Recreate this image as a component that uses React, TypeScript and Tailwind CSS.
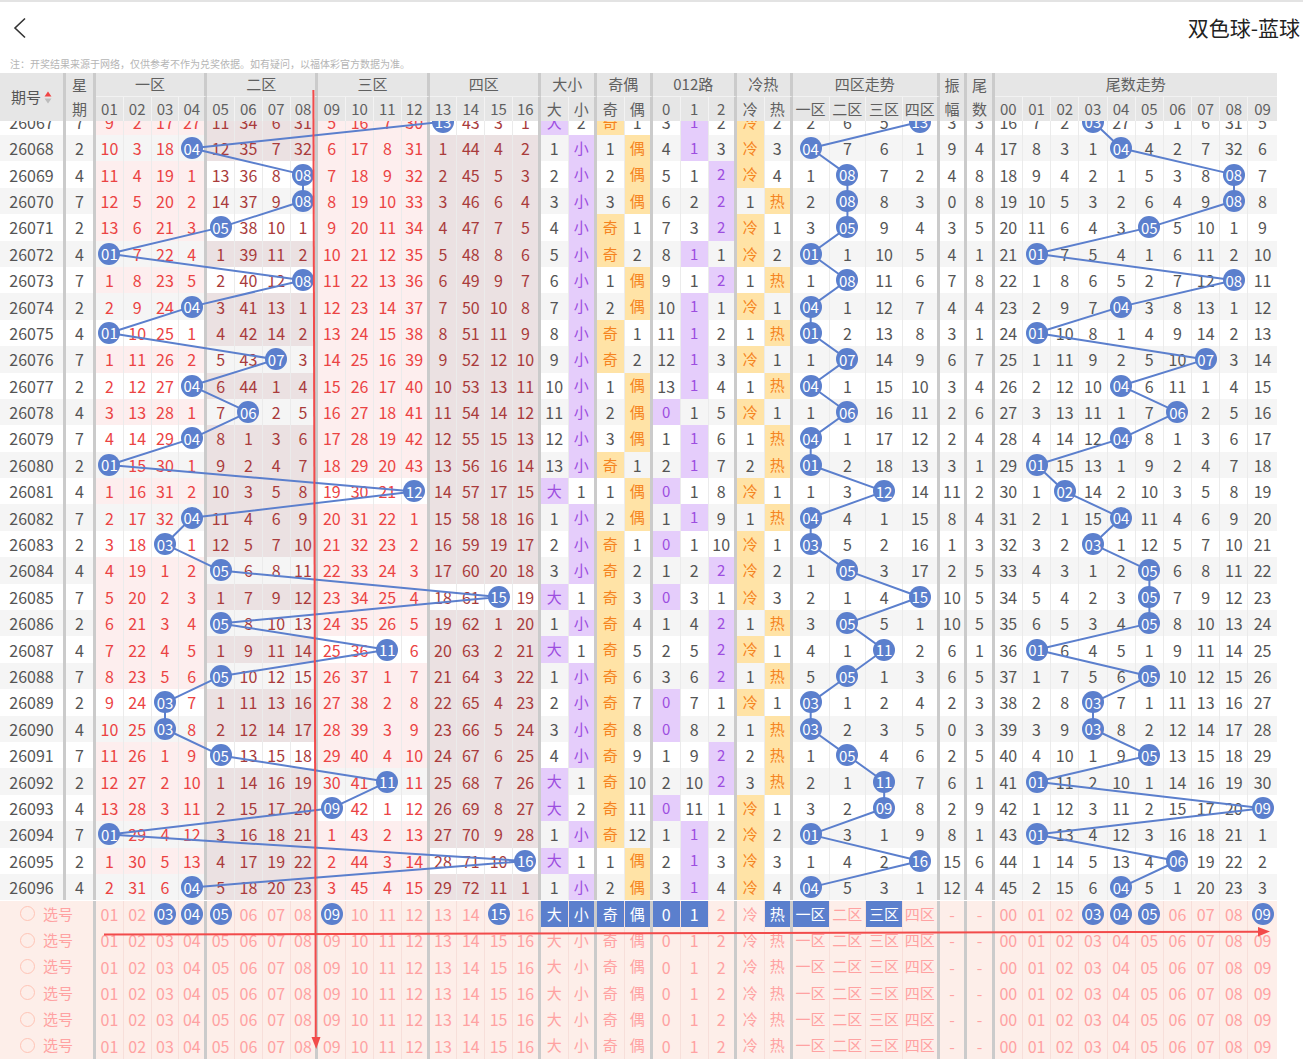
import React from "react";

const BALLS = [13, 4, 8, 8, 5, 1, 8, 4, 1, 7, 4, 6, 4, 1, 12, 4, 3, 5, 15, 5, 11, 5, 3, 3, 5, 11, 9, 1, 16, 4];
// true = 热 hit, false = 冷 hit
const HOT = [
  false, false, false, true, false, false, true, false, true, false,
  true, false, true, true, false, true, false, false, false, true,
  false, true, false, true, true, true, false, false, false, false,
];
const WEEK = [7, 2, 4];

const W: number[] = [
  66, 30,
  ...Array(16).fill(27.8),
  ...Array(9).fill(28),
  ...Array(4).fill(36.75),
  27.5, 27.5,
  ...Array(10).fill(28.2),
];
const THICK = new Set([0, 1, 5, 9, 13, 17, 19, 21, 24, 26, 30, 31, 32]);
const LAST = 42;
const brW = (c: number) => (THICK.has(c) ? 3 : c === LAST ? 0 : 1);
const colX: number[] = [];
{
  let acc = 0;
  W.forEach((w, c) => {
    colX.push(acc + (w - brW(c)) / 2);
    acc += w;
  });
}

const GRID =
  "grid w-[1277px] grid-cols-[66px_30px_repeat(16,27.8px)_repeat(9,28px)_repeat(4,36.75px)_27.5px_27.5px_repeat(10,28.2px)]";

function borderCls(c: number, kind: "body" | "head" | "sel" = "body") {
  if (THICK.has(c)) return "border-r-[3px] border-[#cbcbcb]";
  if (c === LAST) return "";
  if (kind === "head") return "border-r border-[#f3f3f3]";
  if (kind === "sel") return "border-r border-[#f7dfda]";
  return "border-r border-[#ebebeb]";
}

const pad = (n: number) => n.toString().padStart(2, "0");
const step = (prev: number[], hit: number) => prev.map((v, c) => (c === hit ? 0 : v + 1));

type Row = {
  b: number;
  num: number[];
  big: number[];
  odd: number[];
  mod: number[];
  hot: number[];
  zone: number[];
  tail: number[];
  amp: number;
};

const ROWS: Row[] = (() => {
  let num = [9, 2, 17, 27, 11, 34, 6, 31, 5, 16, 7, 30, 0, 43, 3, 1];
  let big = [0, 2];
  let odd = [0, 1];
  let mod = [3, 0, 2];
  let hot = [0, 2];
  let zone = [2, 6, 5, 0];
  let tail = [16, 7, 2, 0, 27, 3, 1, 6, 31, 5];
  const out: Row[] = [];
  let prevB = 16;
  BALLS.forEach((b, i) => {
    if (i > 0) {
      num = step(num, b - 1);
      big = step(big, b >= 9 ? 0 : 1);
      odd = step(odd, b % 2 === 1 ? 0 : 1);
      mod = step(mod, b % 3);
      hot = step(hot, HOT[i] ? 1 : 0);
      zone = step(zone, Math.floor((b - 1) / 4));
      tail = step(tail, b % 10);
    }
    out.push({ b, num, big, odd, mod, hot, zone, tail, amp: Math.abs(b - prevB) });
    prevB = b;
  });
  return out;
})();

function Ball({ label }: { label: string }) {
  return (
    <span className="relative z-20 flex h-[22px] w-[22px] items-center justify-center rounded-full bg-[#5b7fcd] text-[15px] leading-none text-white">
      {label}
    </span>
  );
}

const BASE = "flex items-center justify-center";
const PURPLE = "bg-[#e5cdfb] text-[#9d4ee0] text-[15px]";
const ORANGE = "bg-[#ffe3a6] text-[#f5841f] text-[15px]";

function DataRow({ i }: { i: number }) {
  const r = ROWS[i];
  const b = r.b;
  const rowBg = i % 2 === 0 ? "bg-white" : "bg-[#f5f5f5]";
  const cells: React.ReactNode[] = [];
  const plain = (c: number, content: React.ReactNode) =>
    cells.push(
      <div key={c} className={`${BASE} ${borderCls(c)} ${rowBg} text-[#555]`}>
        {content}
      </div>
    );
  const hitCell = (c: number, text: string, style: string) =>
    cells.push(
      <div key={c} className={`${BASE} ${borderCls(c)} ${style}`}>
        {text}
      </div>
    );

  plain(0, `${26067 + i}`);
  plain(1, WEEK[i % 3]);
  const bz = Math.floor((b - 1) / 4);
  for (let n = 1; n <= 16; n++) {
    const c = n + 1;
    const z = Math.floor((n - 1) / 4);
    const bg = z === bz ? rowBg : z % 2 === 0 ? "bg-[#fdeeee]" : "bg-[#ebe1e2]";
    const txt = z % 2 === 0 ? "text-[#eb4343]" : "text-[#a93b3b]";
    cells.push(
      <div key={c} className={`${BASE} ${borderCls(c)} ${bg} ${txt}`}>
        {n === b ? <Ball label={pad(n)} /> : r.num[n - 1]}
      </div>
    );
  }
  ["大", "小"].forEach((t, k) => (r.big[k] === 0 ? hitCell(18 + k, t, PURPLE) : plain(18 + k, r.big[k])));
  ["奇", "偶"].forEach((t, k) => (r.odd[k] === 0 ? hitCell(20 + k, t, ORANGE) : plain(20 + k, r.odd[k])));
  ["0", "1", "2"].forEach((t, k) => (r.mod[k] === 0 ? hitCell(22 + k, t, PURPLE) : plain(22 + k, r.mod[k])));
  ["冷", "热"].forEach((t, k) => (r.hot[k] === 0 ? hitCell(25 + k, t, ORANGE) : plain(25 + k, r.hot[k])));
  r.zone.forEach((v, k) => plain(27 + k, v === 0 ? <Ball label={pad(b)} /> : v));
  plain(31, r.amp);
  plain(32, b % 10);
  r.tail.forEach((v, k) => plain(33 + k, v === 0 ? <Ball label={pad(k)} /> : v));

  return <div className={`${GRID} h-[26.4px] text-[16px]`}>{cells}</div>;
}

function SortIcon() {
  return (
    <svg width="8" height="13" viewBox="0 0 8 13">
      <path d="M4 0.5 L7.5 5.5 H0.5 Z" fill="#f04545" />
      <path d="M4 12.5 L7.5 7.5 H0.5 Z" fill="#bdbdbd" />
    </svg>
  );
}

function Header() {
  const groups: [string, string, number][] = [
    ["一区", "col-span-4", 5],
    ["二区", "col-span-4", 9],
    ["三区", "col-span-4", 13],
    ["四区", "col-span-4", 17],
    ["大小", "col-span-2", 19],
    ["奇偶", "col-span-2", 21],
    ["012路", "col-span-3", 24],
    ["冷热", "col-span-2", 26],
    ["四区走势", "col-span-4", 30],
  ];
  const labels: [number, string][] = [];
  for (let n = 1; n <= 16; n++) labels.push([n + 1, pad(n)]);
  ["大", "小", "奇", "偶", "0", "1", "2", "冷", "热", "一区", "二区", "三区", "四区"].forEach((t, k) =>
    labels.push([18 + k, t])
  );
  const tails: [number, string][] = [];
  for (let k = 0; k < 10; k++) tails.push([33 + k, pad(k)]);

  return (
    <div className={`${GRID} h-[48px] grid-rows-[24px_24px] bg-[#e6e6e6] text-[15px] text-[#606060]`}>
      <div className="row-span-2 flex items-center justify-center gap-[3px] border-r-[3px] border-[#cbcbcb] text-[#555]">
        <span>期号</span>
        <SortIcon />
      </div>
      <div className="row-span-2 flex flex-col items-center justify-around border-r-[3px] border-[#cbcbcb]">
        <span>星</span>
        <span>期</span>
      </div>
      {groups.map(([t, span, c]) => (
        <div
          key={t}
          className={`${span} flex items-center justify-center border-b border-r-[3px] border-b-[#f2f2f2] border-r-[#cbcbcb]`}
        >
          {t}
        </div>
      ))}
      <div className="row-span-2 flex flex-col items-center justify-around border-r-[3px] border-[#cbcbcb]">
        <span>振</span>
        <span>幅</span>
      </div>
      <div className="row-span-2 flex flex-col items-center justify-around border-r-[3px] border-[#cbcbcb]">
        <span>尾</span>
        <span>数</span>
      </div>
      <div className="col-span-10 flex items-center justify-center border-b border-b-[#f2f2f2]">尾数走势</div>
      {labels.map(([c, t]) => (
        <div key={c} className={`${BASE} ${borderCls(c, "head")}`}>
          {t}
        </div>
      ))}
      {tails.map(([c, t]) => (
        <div key={c} className={`${BASE} ${borderCls(c, "head")}`}>
          {t}
        </div>
      ))}
    </div>
  );
}

const ys = (i: number) => -12.4 + 26.4 * i + 13.2;
const SEQ = [16, ...BALLS];
const pts = (f: (b: number) => number) =>
  SEQ.map((b, k) => `${colX[f(b)].toFixed(2)},${ys(k - 1).toFixed(2)}`).join(" ");

function Body() {
  return (
    <div className="relative h-[779.6px] w-[1277px] overflow-hidden">
      <div className="-mt-[12.4px]">
        {ROWS.map((_, i) => (
          <DataRow key={i} i={i} />
        ))}
      </div>
      <svg className="pointer-events-none absolute left-0 top-0 z-10" width={1277} height={780}>
        {[pts((b) => 1 + b), pts((b) => 27 + Math.floor((b - 1) / 4)), pts((b) => 33 + (b % 10))].map((p, k) => (
          <polyline key={k} points={p} fill="none" stroke="#5b7fcd" strokeWidth={2} strokeLinejoin="round" />
        ))}
      </svg>
    </div>
  );
}

const SEL_BALLS = new Set([4, 5, 6, 10, 16, 36, 37, 38, 42]);
const SEL_BLOCKS = new Set([18, 19, 20, 21, 22, 23, 26, 27, 29]);

function selLabel(c: number) {
  if (c <= 17) return pad(c - 1);
  if (c <= 30) return ["大", "小", "奇", "偶", "0", "1", "2", "冷", "热", "一区", "二区", "三区", "四区"][c - 18];
  if (c <= 32) return "-";
  return pad(c - 33);
}

function SelRow({ r }: { r: number }) {
  const cells: React.ReactNode[] = [];
  for (let c = 2; c <= 42; c++) {
    const t = selLabel(c);
    const isCJK = c >= 18 && c <= 30 && !(c >= 22 && c <= 24);
    const size = isCJK ? "text-[15px]" : "text-[16px]";
    if (r === 0 && SEL_BALLS.has(c)) {
      cells.push(
        <div key={c} className={`${BASE} ${borderCls(c, "sel")}`}>
          <Ball label={t} />
        </div>
      );
    } else if (r === 0 && SEL_BLOCKS.has(c)) {
      cells.push(
        <div key={c} className={`${BASE} ${borderCls(c, "sel")} bg-[#5b7fcd] text-white ${size}`}>
          {t}
        </div>
      );
    } else {
      cells.push(
        <div key={c} className={`${BASE} ${borderCls(c, "sel")} ${size}`}>
          {t}
        </div>
      );
    }
  }
  return (
    <div className={`${GRID} h-[26.4px] bg-[#fdeee9] text-[#ffa2a2]`}>
      <div className="col-span-2 flex items-center gap-[8px] border-r-[3px] border-[#cbcbcb] pl-[20px] text-[15px]">
        <span className="h-[15px] w-[15px] rounded-full border border-[#ffc4b6]" />
        <span>选号</span>
      </div>
      {cells}
    </div>
  );
}

export default function App() {
  return (
    <div className="relative h-[1060px] w-[1303px] overflow-hidden bg-white font-['Noto_Sans_CJK_SC','Noto_Sans',sans-serif]">
      <div className="flex h-[54px] items-center justify-between border-t-2 border-[#e3e3e3] pl-[13px] pr-[3px]">
        <svg width="14" height="22" viewBox="0 0 14 22">
          <path d="M12 1.5 L2 11 L12 20.5" fill="none" stroke="#333" strokeWidth="1.6" />
        </svg>
        <span className="text-[21px] text-[#222]">双色球-蓝球</span>
      </div>
      <div className="flex h-[19px] items-center pl-[10px] text-[10px] text-[#b5b5b5]">
        注：开奖结果来源于网络，仅供参考不作为兑奖依据。如有疑问，以福体彩官方数据为准。
      </div>
      <Header />
      <Body />
      {[0, 1, 2, 3, 4, 5].map((r) => (
        <SelRow key={r} r={r} />
      ))}
      <svg className="pointer-events-none absolute left-0 top-0 z-30" width={1303} height={1060}>
        <line x1={313.4} y1={90} x2={315.8} y2={1040} stroke="#f24b4b" strokeWidth={2} />
        <polygon points="311.5,1037 320.5,1037 316.2,1049" fill="#f24b4b" />
        <line x1={104} y1={934.5} x2={1260} y2={931.8} stroke="#f24b4b" strokeWidth={2} />
        <polygon points="1258,927 1258,936.5 1270,931.6" fill="#f24b4b" />
      </svg>
    </div>
  );
}
